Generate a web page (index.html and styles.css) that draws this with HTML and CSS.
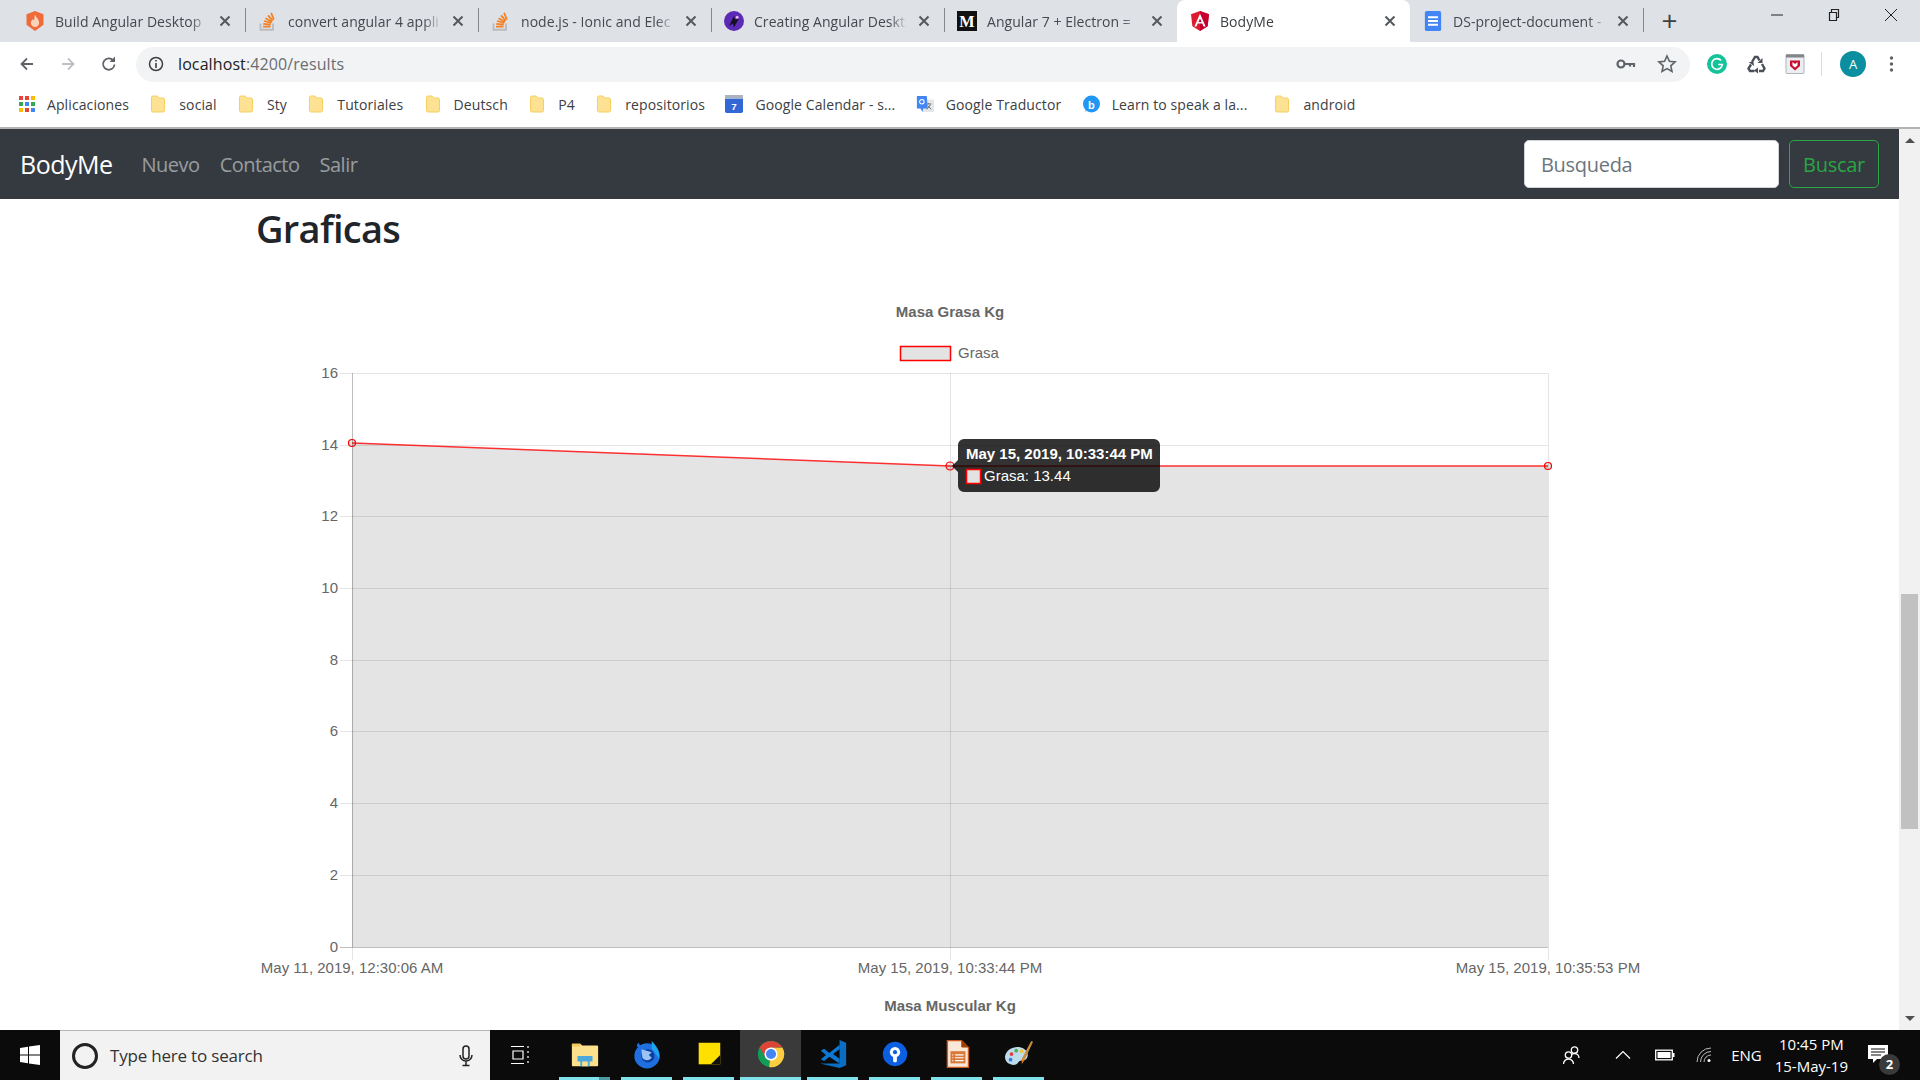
FILE: index.html
```html
<!DOCTYPE html>
<html lang="en">
<head>
  <meta charset="UTF-8">
  <title>BodyMe</title>
  <link rel="stylesheet" href="styles.css">
</head>
<body>
  <svg class="defs" width="0" height="0">
    <symbol id="so" viewBox="0 0 16 16">
      <path d="M2 10v5h10v-5" fill="none" stroke="#bcbbbb" stroke-width="1.5"/>
      <path d="M4 12.500h6M4.200 10.300l6 .6M4.800 8l5.800 1.600M6 5.800l5.200 3M8 3.500l3.800 4.400M10.500 1.500l2.200 5.400" fill="none" stroke="#f48024" stroke-width="1.4"/>
    </symbol>
    <symbol id="folder" viewBox="0 0 16 18">
      <path d="M1.5 2.500a1.500 1.500 0 0 1 1.500-1.500h4l2 2h4a1.500 1.500 0 0 1 1.500 1.500v11a1.500 1.500 0 0 1-1.500 1.500h-10a1.500 1.500 0 0 1-1.500-1.500z" fill="#fde293" stroke="#f6cf5f"/>
    </symbol>
    <symbol id="x" viewBox="0 0 12 12">
      <path d="M1.500 1.500l9 9M10.500 1.500l-9 9" stroke="#55585c" stroke-width="2" fill="none"/>
    </symbol>
  </svg>

  <div class="tabstrip">
    <div class="tab">
      <svg class="fav" viewBox="0 0 16 16"><path d="M8 0l6.800 2.500V11L8 16l-6.800-5V2.500z" fill="#ef6c3a"/><path d="M8 3c1 2.500 3.300 3.500 3.300 6.500A3.300 3.300 0 0 1 4.700 9.500c0-1.500.9-2.200 1.400-3.200.4.800.7 1 1.100 1.300C7.400 6 7.600 4.800 8 3z" fill="#fbd3b8"/></svg>
      <span class="tab-title">Build Angular Desktop</span>
      <svg class="tab-x"><use href="#x"/></svg>
    </div>
    <div class="tab sep">
      <svg class="fav"><use href="#so"/></svg>
      <span class="tab-title">convert angular 4 appli</span>
      <svg class="tab-x"><use href="#x"/></svg>
    </div>
    <div class="tab sep">
      <svg class="fav"><use href="#so"/></svg>
      <span class="tab-title">node.js - Ionic and Elec</span>
      <svg class="tab-x"><use href="#x"/></svg>
    </div>
    <div class="tab sep">
      <svg class="fav" viewBox="0 0 16 16"><circle cx="8" cy="8" r="8" fill="#5b2bb5"/><path d="M4 12l4-8 1 3 3-1-4 7-1-3z" fill="#14101f"/><circle cx="10.500" cy="5" r="1.200" fill="#e6b8ff"/></svg>
      <span class="tab-title">Creating Angular Deskt</span>
      <svg class="tab-x"><use href="#x"/></svg>
    </div>
    <div class="tab sep">
      <svg class="fav" viewBox="0 0 16 16"><rect width="16" height="16" fill="#111"/><text x="8" y="12.500" class="fav-m">M</text></svg>
      <span class="tab-title">Angular 7 + Electron =</span>
      <svg class="tab-x"><use href="#x"/></svg>
    </div>
    <div class="tab active">
      <svg class="fav" viewBox="0 0 16 16"><path d="M8 0L.800 2.600l1.100 9.500L8 16l6.100-3.900 1.100-9.500z" fill="#dd1b2e"/><path d="M8 0v16l6.100-3.900 1.100-9.500z" fill="#c3002f"/><path d="M8 2.200L3.500 12.300h1.700l.9-2.300h3.800l.9 2.300h1.700zM8 6l1.300 2.800H6.700z" fill="#fff"/></svg>
      <span class="tab-title">BodyMe</span>
      <svg class="tab-x"><use href="#x"/></svg>
    </div>
    <div class="tab">
      <svg class="fav" viewBox="0 0 16 16"><rect x="1.500" width="13" height="16" rx="1.500" fill="#4285f4"/><path d="M4 5h8M4 8h8M4 11h8" stroke="#fff" stroke-width="1.500"/></svg>
      <span class="tab-title">DS-project-document -</span>
      <svg class="tab-x"><use href="#x"/></svg>
    </div>
    <div class="new-tab">+</div>
    <div class="win-btns">
      <svg viewBox="0 0 14 14"><path d="M1 7h12" stroke="#222" stroke-width="1"/></svg>
      <svg viewBox="0 0 14 14"><path d="M2.500 4.500h7v8h-7zM4.500 4.500v-3h7v8h-2" fill="none" stroke="#222" stroke-width="1.200"/></svg>
      <svg viewBox="0 0 14 14"><path d="M1 1l12 12M13 1L1 13" stroke="#222" stroke-width="1"/></svg>
    </div>
  </div>

  <div class="toolbar">
    <svg class="nav-ic" viewBox="0 0 18 18"><path d="M15 9H4M9 3.500L3.500 9 9 14.500" fill="none" stroke="#5f6368" stroke-width="1.800"/></svg>
    <svg class="nav-ic" viewBox="0 0 18 18"><path d="M3 9h11M9 3.500L14.500 9 9 14.500" fill="none" stroke="#bdc1c6" stroke-width="1.800"/></svg>
    <svg class="nav-ic" viewBox="0 0 18 18"><path d="M14.500 9.500a5.700 5.700 0 1 1-1.500-4.300" fill="none" stroke="#5f6368" stroke-width="1.800"/><path d="M15 1.500V7H9.500z" fill="#5f6368"/></svg>
    <div class="omnibox">
      <svg class="info" viewBox="0 0 16 16"><circle cx="8" cy="8" r="6.500" fill="none" stroke="#3c4043" stroke-width="1.500"/><path d="M8 7v5M8 4v1.600" stroke="#3c4043" stroke-width="1.600"/></svg>
      <span class="url">localhost<span class="url-path">:4200/results</span></span>
      <svg class="key" viewBox="0 0 20 12"><circle cx="5" cy="6" r="3.500" fill="none" stroke="#5f6368" stroke-width="2.200"/><path d="M8 6h10v3M14 6v2.500" fill="none" stroke="#5f6368" stroke-width="2.200"/></svg>
      <svg class="star" viewBox="0 0 20 20"><path d="M10 2l2.400 5.300 5.700.6-4.300 3.900 1.200 5.700L10 14.600l-5 2.900 1.200-5.700-4.300-3.900 5.700-.6z" fill="none" stroke="#5f6368" stroke-width="1.600"/></svg>
    </div>
    <div class="ext-icons">
      <svg viewBox="0 0 20 20"><circle cx="10" cy="10" r="10" fill="#15c39a"/><path d="M14 6.500a5.300 5.300 0 1 0 1.300 4h-4" fill="none" stroke="#fff" stroke-width="1.700"/></svg>
      <svg viewBox="0 0 20 20"><g fill="none" stroke="#4a5058" stroke-width="2.400"><path d="M6 8l3-5h2.500l2 3.500"/><path d="M16 10l2.500 4.500-1.500 2.500h-4"/><path d="M8.500 17H4l-1.500-2.500L5 10.500"/></g><path d="M16.500 4v5h-5zM2.500 8h5l.5 4zM12 13.500v6L8 16.500z" fill="#4a5058"/></svg>
      <svg viewBox="0 0 20 20"><rect x="1" y=".5" width="18" height="19" rx="1" fill="#eceff1" stroke="#b0b5b9"/><rect x="1" y=".5" width="18" height="3" fill="#80868b"/><path d="M5 6.500h10v5.500l-5 4.500-5-4.500z" fill="#c8102e"/><path d="M7.500 8v3.500l2.500 2 2.500-2V8L10 10z" fill="#fff"/></svg>
      <div class="ext-sep"></div>
      <div class="avatar">A</div>
      <svg class="dots" viewBox="0 0 4 18"><circle cx="2" cy="3" r="1.700"/><circle cx="2" cy="9" r="1.700"/><circle cx="2" cy="15" r="1.700"/></svg>
    </div>
  </div>

  <div class="bookmarks">
    <div class="bm bm-apps">
      <svg class="bm-ic" viewBox="0 0 16 16">
        <rect x="0" y="0" width="4" height="4" fill="#ea4335"/><rect x="6" y="0" width="4" height="4" fill="#ea4335"/><rect x="12" y="0" width="4" height="4" fill="#fbbc04"/>
        <rect x="0" y="6" width="4" height="4" fill="#34a853"/><rect x="6" y="6" width="4" height="4" fill="#4285f4"/><rect x="12" y="6" width="4" height="4" fill="#34a853"/>
        <rect x="0" y="12" width="4" height="4" fill="#fbbc04"/><rect x="6" y="12" width="4" height="4" fill="#ea4335"/><rect x="12" y="12" width="4" height="4" fill="#4285f4"/>
      </svg>Aplicaciones
    </div>
    <div class="bm"><svg class="bm-ic"><use href="#folder"/></svg>social</div>
    <div class="bm"><svg class="bm-ic"><use href="#folder"/></svg>Sty</div>
    <div class="bm"><svg class="bm-ic"><use href="#folder"/></svg>Tutoriales</div>
    <div class="bm"><svg class="bm-ic"><use href="#folder"/></svg>Deutsch</div>
    <div class="bm"><svg class="bm-ic"><use href="#folder"/></svg>P4</div>
    <div class="bm"><svg class="bm-ic"><use href="#folder"/></svg>repositorios</div>
    <div class="bm"><svg class="bm-ic" viewBox="0 0 20 20"><path d="M0 4h20v14a2 2 0 0 1-2 2H2a2 2 0 0 1-2-2z" fill="#3367d6"/><rect width="20" height="4" fill="#aab4c0"/><text x="10" y="17" class="cal-num">7</text></svg>Google Calendar - s...</div>
    <div class="bm"><svg class="bm-ic" viewBox="0 0 20 20"><rect x="7" y="5" width="13" height="14" rx="1" fill="#e4e6e8"/><path d="M11 10h6M14 9v1M12 16l4-5M13 12l4 4" stroke="#5f6368" stroke-width="1" fill="none"/><path d="M1 1h11l1 14H8l-1 4-2-4H1z" fill="#4285f4"/><circle cx="6.500" cy="7.500" r="2.500" fill="none" stroke="#fff" stroke-width="1.200"/></svg>Google Traductor</div>
    <div class="bm bm-learn"><svg class="bm-ic" viewBox="0 0 18 18"><circle cx="9.500" cy="9" r="8.500" fill="#2196f3"/><path d="M.5 17c2 0 3-1 3.500-2l1 1z" fill="#2196f3"/><text x="9.500" y="13.500" class="cal-num">b</text></svg>Learn to speak a la...</div>
    <div class="bm"><svg class="bm-ic"><use href="#folder"/></svg>android</div>
  </div>

  <div class="viewport">
    <div class="page">
      <nav class="navbar">
        <a class="brand">BodyMe</a>
        <a class="nav-link">Nuevo</a>
        <a class="nav-link">Contacto</a>
        <a class="nav-link">Salir</a>
        <form class="search">
          <input class="search-input" type="text" placeholder="Busqueda">
          <button class="search-btn" type="button">Buscar</button>
        </form>
      </nav>
      <main class="content">
        <h1>Graficas</h1>
        <svg class="chart" width="1420" height="780" viewBox="0 0 1420 780">
          <text x="711" y="37" class="chart-title">Masa Grasa Kg</text>
          <rect x="661.500" y="66.500" width="50" height="14" fill="#e3e3e3" stroke="#f00" stroke-width="1.500"/>
          <text x="719" y="78" class="tick">Grasa</text>

          <path d="M113 163L711 186L1309 186V667H113Z" fill="#e4e4e4"/>
          <g class="grid">
            <path d="M101 93.500H1309M101 165.500H1309M101 236.500H1309M101 308.500H1309M101 380.500H1309M101 451.500H1309M101 523.500H1309M101 595.500H1309"/>
            <path d="M711.500 93V680M1309.500 93V680M113.500 667V680"/>
          </g>
          <path class="axis" d="M113.500 93V667M101 667.500H1309"/>

          <text x="99" y="98" class="tick end">16</text>
          <text x="99" y="170" class="tick end">14</text>
          <text x="99" y="241" class="tick end">12</text>
          <text x="99" y="313" class="tick end">10</text>
          <text x="99" y="385" class="tick end">8</text>
          <text x="99" y="456" class="tick end">6</text>
          <text x="99" y="528" class="tick end">4</text>
          <text x="99" y="600" class="tick end">2</text>
          <text x="99" y="672" class="tick end">0</text>

          <text x="113" y="693" class="tick mid">May 11, 2019, 12:30:06 AM</text>
          <text x="711" y="693" class="tick mid">May 15, 2019, 10:33:44 PM</text>
          <text x="1309" y="693" class="tick mid">May 15, 2019, 10:35:53 PM</text>

          <path class="line" d="M113 163L711 186L1309 186"/>
          <circle class="pt" cx="113" cy="163" r="3.500"/>
          <circle class="pt" cx="711" cy="186" r="4"/>
          <circle class="pt" cx="1309" cy="186" r="3.500"/>

          <path class="tip" d="M725 159h190a6 6 0 0 1 6 6v41a6 6 0 0 1-6 6h-190a6 6 0 0 1-6-6v-14l-6-6 6-6v-15a6 6 0 0 1 6-6z"/>
          <text x="727" y="179" class="tip-head">May 15, 2019, 10:33:44 PM</text>
          <rect x="727.500" y="189.500" width="14" height="14" fill="#e3e3e3" stroke="#f00" stroke-width="1.500"/>
          <text x="745" y="201" class="tip-body">Grasa: 13.44</text>

          <text x="711" y="731" class="chart-title">Masa Muscular Kg</text>
        </svg>
      </main>
    </div>
    <div class="scrollbar">
      <div class="arrow-up"></div>
      <div class="thumb"></div>
      <div class="arrow-down"></div>
    </div>
  </div>

  <footer class="taskbar">
    <div class="start">
      <svg viewBox="0 0 20 20"><path d="M0 3l8-1.200V9.500H0zM9 1.600L20 0v9.500H9zM0 10.500h8v7.700L0 17zM9 10.500h11V20L9 18.400z" fill="#fff"/></svg>
    </div>
    <div class="searchbox">
      <span class="cortana"></span>
      <span class="search-text">Type here to search</span>
      <svg class="mic" viewBox="0 0 14 22"><rect x="4" y="1" width="6" height="13" rx="3" fill="none" stroke="#222" stroke-width="1.500"/><path d="M1 10a6 6 0 0 0 12 0M7 16v4M3.500 20.500h7" fill="none" stroke="#222" stroke-width="1.500"/></svg>
    </div>
    <div class="task-view">
      <svg viewBox="0 0 20 20"><path d="M1 1.500h13M1 18.500h13M3 6h10v8H3zM18 1v2M18 6v2M18 11v2M18 16v2" fill="none" stroke="#fff" stroke-width="1.200"/></svg>
    </div>
    <div class="task-apps">
      <div class="app run stack">
        <svg viewBox="0 0 32 32"><path d="M2 6a1 1 0 0 1 1-1h8l2 2h16a1 1 0 0 1 1 1v20a1 1 0 0 1-1 1H3a1 1 0 0 1-1-1z" fill="#fde08b"/><path d="M2 5h9v3H2z" fill="#f4c95c"/><path d="M8 18h16v6h-3v5h-10v-5H8z" fill="#4fa8dc"/><rect x="13" y="24" width="6" height="5" fill="#fde08b"/></svg>
      </div>
      <div class="app run">
        <svg viewBox="0 0 32 32"><circle cx="16" cy="18" r="13.500" fill="#1f6fe0"/><path d="M21 2c5 5 9 11 8 19l-8-11z" fill="#1fa3ef"/><path d="M5 8c0-2 1-3 2-4l3 5z" fill="#1f6fe0"/><circle cx="17" cy="18" r="7" fill="#0c3f9e"/><path d="M10 11l11 3-3 3 3 3c-3 4-8 3-10 0z" fill="#9cc3f5"/></svg>
      </div>
      <div class="app run">
        <svg viewBox="0 0 32 32"><rect x="5" y="4" width="23" height="23" fill="#ffe000"/><path d="M28 27H18l10-10z" fill="#111"/></svg>
      </div>
      <div class="app run on">
        <svg viewBox="0 0 32 32"><circle cx="16" cy="16" r="14" fill="#0f9d58"/><path d="M16 9h12.100A14 14 0 0 1 14 29.900L16 16z" fill="#ffcd40"/><path d="M3.900 9a14 14 0 0 1 24.200 0H16L9.900 19.500z" fill="#db4437"/><circle cx="16" cy="16" r="7" fill="#fff"/><circle cx="16" cy="16" r="5.400" fill="#4285f4"/></svg>
      </div>
      <div class="app run">
        <svg viewBox="0 0 32 32"><path d="M23 1l7 3v24l-7 3L2 26h21V5z" fill="#0a6fc2"/><path d="M23 6v5l-7 5 7 5v5L12 19l-5.500 4.500L3 21.500 8.500 17 3 12.500l3.500-2L12 15z" fill="#0a78d4"/></svg>
      </div>
      <div class="app run">
        <svg viewBox="0 0 32 32"><circle cx="16" cy="16" r="13" fill="#0b5fe0"/><circle cx="16" cy="14" r="5.500" fill="#fff"/><circle cx="16" cy="14" r="2.200" fill="#0b5fe0"/><path d="M14 18h4v6l-2 1-2-1z" fill="#fff"/></svg>
      </div>
      <div class="app run">
        <svg viewBox="0 0 32 32"><path d="M5 1h16l8 8v22H5z" fill="#c85b1e"/><path d="M6.500 2.500h14v6h7v21h-21z" fill="#fbe7d8"/><path d="M21 1l8 8h-8z" fill="#a33e03"/><rect x="9" y="13" width="16" height="13" fill="#d97a3c"/><path d="M14 17h9M14 20h9M14 23h9M11 17h1M11 20h1M11 23h1" stroke="#fff" stroke-width="1.300"/></svg>
      </div>
      <div class="app run">
        <svg viewBox="0 0 32 32"><path d="M1 19C2 11 11 7 18 9c7 2 9 8 6 12-2 3-6 1-8 3-2 3-5 5-9 3-4-1-6-4-6-8z" fill="#bcdcec"/><circle cx="8" cy="16" r="2" fill="#e23c3c"/><circle cx="13" cy="12.500" r="2" fill="#4caf50"/><circle cx="7" cy="22" r="2" fill="#3a7bd5"/><circle cx="19" cy="13" r="2" fill="#f4c430"/><path d="M29 2l2 1-9 19-3-1z" fill="#c6893f"/><path d="M19 21l3 1-3 5z" fill="#e07a1f"/></svg>
      </div>
    </div>
    <div class="tray">
      <svg class="tray-people" viewBox="0 0 20 20"><circle cx="12.500" cy="5" r="3.200" fill="none" stroke="#fff" stroke-width="1.300"/><path d="M8 13a4.500 4.500 0 0 1 9 0" fill="none" stroke="#fff" stroke-width="1.300"/><circle cx="6.500" cy="10" r="3.200" fill="#0b0b0b" stroke="#fff" stroke-width="1.300"/><path d="M1.500 19a5 5 0 0 1 10 0" fill="none" stroke="#fff" stroke-width="1.300"/></svg>
      <svg class="tray-chev" viewBox="0 0 16 10"><path d="M1 8.500L8 1.500l7 7" fill="none" stroke="#fff" stroke-width="1.200"/></svg>
      <svg class="tray-batt" viewBox="0 0 20 12"><rect x=".7" y="1.200" width="16.600" height="9.600" fill="#0b0b0b" stroke="#fff" stroke-width="1.300"/><rect x="2.500" y="3" width="13" height="6" fill="#fff"/><rect x="18" y="4" width="1.500" height="4" fill="#fff"/></svg>
      <svg class="tray-wifi" viewBox="0 0 16 16"><path d="M1 15A14 14 0 0 1 15 1M4.500 15A10.500 10.500 0 0 1 15 4.500M8 15a7 7 0 0 1 7-7" fill="none" stroke="#bbb" stroke-width="1"/><circle cx="13" cy="13.500" r="1.500" fill="#fff"/></svg>
      <span class="tray-lang">ENG</span>
      <div class="clock"><span>10:45 PM</span><span>15-May-19</span></div>
      <div class="notif">
        <svg viewBox="0 0 20 18"><path d="M0 0h20v14H9l-4 4v-4H0z" fill="#fff"/><path d="M3 4h14M3 7h14M3 10h10" stroke="#0b0b0b" stroke-width="1"/></svg>
        <span class="notif-count">2</span>
      </div>
    </div>
  </footer>
</body>
</html>
```

FILE: styles.css
```css
* {
  box-sizing: border-box;
}
html, body {
  margin: 0;
  height: 100%;
}
body {
  width: 1920px;
  height: 1080px;
  overflow: hidden;
  display: flex;
  flex-direction: column;
  font-family: "Open Sans", "Noto Sans", sans-serif;
  background: #fff;
}
.defs {
  position: absolute;
}

/* browser tabs */
.tabstrip {
  height: 42px;
  flex: none;
  display: flex;
  background: #dee1e6;
  padding-left: 12px;
}
.tab {
  width: 233px;
  height: 42px;
  display: flex;
  align-items: center;
  padding: 0 0 0 13px;
  position: relative;
  font-size: 14px;
  letter-spacing: 0.05px;
  color: #45494e;
}
.tab.sep::before {
  content: "";
  position: absolute;
  left: 0;
  top: 8px;
  height: 24px;
  width: 1px;
  background: #85888c;
}
.tab.active {
  background: #fff;
  border-radius: 8px 8px 0 0;
  color: #3c4043;
}
.fav {
  width: 20px;
  height: 20px;
  flex: none;
}
.fav-m {
  font-family: "Liberation Serif", serif;
  font-weight: 700;
  font-size: 13px;
  fill: #fff;
  text-anchor: middle;
}
.tab-title {
  margin-left: 10px;
  width: 154px;
  flex: none;
  white-space: nowrap;
  -webkit-mask-image: linear-gradient(to right, #000 88%, transparent);
  mask-image: linear-gradient(to right, #000 88%, transparent);
}
.tab-x {
  width: 12px;
  height: 12px;
  margin-left: 10px;
  flex: none;
}
.new-tab {
  width: 52px;
  height: 24px;
  margin-top: 8px;
  text-align: center;
  font-size: 28px;
  line-height: 24px;
  color: #3c4043;
  border-left: 1px solid #85888c;
}
.win-btns {
  margin-left: auto;
  display: flex;
  gap: 43px;
  padding: 8px 22px 0 0;
}
.win-btns svg {
  width: 14px;
  height: 14px;
}

/* address bar */
.toolbar {
  height: 44px;
  flex: none;
  display: flex;
  align-items: center;
  background: #fff;
  padding-left: 18px;
}
.nav-ic {
  width: 18px;
  height: 18px;
  margin-right: 23px;
  flex: none;
}
.omnibox {
  margin-left: -5px;
  width: 1554px;
  height: 35px;
  border-radius: 18px;
  background: #f1f3f4;
  display: flex;
  align-items: center;
  padding-left: 12px;
}
.info {
  width: 16px;
  height: 16px;
  flex: none;
}
.url {
  margin-left: 14px;
  font-size: 16px;
  letter-spacing: 0.1px;
  color: #202124;
}
.url-path {
  color: #6a6d71;
}
.key {
  margin-left: auto;
  width: 20px;
  height: 12px;
}
.star {
  margin: 0 13px 0 21px;
  width: 20px;
  height: 20px;
}
.ext-icons {
  display: flex;
  align-items: center;
  margin-left: 17px;
  gap: 19px;
}
.ext-icons > svg {
  width: 20px;
  height: 20px;
}
.ext-sep {
  width: 1px;
  height: 24px;
  background: #dadce0;
  margin: 0 -3px;
}
.avatar {
  width: 26px;
  height: 26px;
  border-radius: 50%;
  background: #0a8ea0;
  color: #fff;
  font-size: 13px;
  text-align: center;
  line-height: 26px;
  margin-left: 2px;
}
.ext-icons > .dots {
  width: 5px;
  height: 18px;
  fill: #5f6368;
  margin-left: 4px;
}

/* bookmarks */
.bookmarks {
  height: 43px;
  flex: none;
  display: flex;
  align-items: center;
  padding: 0 0 5px 19px;
  background: #fff;
  border-bottom: 2px solid #b3b3b3;
  font-size: 14px;
  letter-spacing: 0.1px;
  color: #3c4043;
  white-space: nowrap;
}
.bm {
  display: flex;
  align-items: center;
  margin-right: 20.4px;
}
.bm-learn {
  margin-right: 26px;
}
.bm-ic {
  width: 18px;
  height: 18px;
  margin-right: 12px;
  flex: none;
}
.bm-apps .bm-ic {
  width: 16px;
  height: 16px;
  margin-right: 12px;
}
.cal-num {
  font-family: "Liberation Sans", sans-serif;
  font-weight: 700;
  font-size: 11px;
  fill: #fff;
  text-anchor: middle;
}

/* page */
.viewport {
  flex: 1;
  display: flex;
  min-height: 0;
}
.page {
  flex: 1;
  min-width: 0;
  overflow: hidden;
}
.navbar {
  height: 70px;
  background: #343a40;
  display: flex;
  align-items: center;
  padding: 0 20px;
}
.brand {
  font-size: 25px;
  letter-spacing: -0.5px;
  color: #fff;
  margin-right: 29px;
}
.nav-link {
  font-size: 20px;
  letter-spacing: -0.5px;
  color: rgba(255, 255, 255, 0.5);
  margin-right: 20px;
}
.search {
  margin-left: auto;
  display: flex;
  gap: 10px;
}
.search-input {
  width: 255px;
  height: 48px;
  padding: 0 16px;
  border: 1px solid #ced4da;
  border-radius: 5px;
  background: #fff;
  font-family: inherit;
  font-size: 20px;
  letter-spacing: -0.3px;
}
.search-input::placeholder {
  color: #6c757d;
}
.search-btn {
  width: 90px;
  height: 48px;
  border: 1px solid #28a745;
  border-radius: 5px;
  background: transparent;
  color: #28a745;
  font-family: inherit;
  font-size: 20px;
  letter-spacing: -0.3px;
  padding: 0;
}
.content {
  padding-left: 256px;
}
h1 {
  margin: 0;
  font-size: 38px;
  line-height: 58px;
  font-weight: 600;
  letter-spacing: -0.7px;
  color: #212529;
}

/* chart */
.chart {
  display: block;
  margin: 23px 0 0 -17px;
  font-family: "Liberation Sans", Arial, sans-serif;
}
.chart-title {
  font-size: 15px;
  font-weight: 700;
  fill: #666;
  text-anchor: middle;
}
.tick {
  font-size: 15px;
  fill: #666;
}
.tick.end {
  text-anchor: end;
}
.tick.mid {
  text-anchor: middle;
}
.grid path {
  stroke: rgba(0, 0, 0, 0.1);
  stroke-width: 1;
  fill: none;
}
.axis {
  stroke: rgba(0, 0, 0, 0.25);
  stroke-width: 1;
  fill: none;
}
.line {
  stroke: #f00;
  stroke-width: 1.500;
  fill: none;
  opacity: 0.8;
}
.pt {
  fill: rgba(0, 0, 0, 0.1);
  stroke: #f00;
  stroke-width: 1.200;
}
.tip {
  fill: rgba(0, 0, 0, 0.8);
}
.tip-head {
  font-size: 15px;
  font-weight: 700;
  fill: #fff;
}
.tip-body {
  font-size: 15px;
  fill: #fff;
}

/* scrollbar */
.scrollbar {
  width: 21px;
  flex: none;
  background: #f1f1f1;
  position: relative;
}
.thumb {
  position: absolute;
  top: 465px;
  left: 2px;
  width: 17px;
  height: 235px;
  background: #c1c1c1;
}
.arrow-up,
.arrow-down {
  position: absolute;
  left: 6px;
  width: 0;
  height: 0;
  border-left: 5px solid transparent;
  border-right: 5px solid transparent;
}
.arrow-up {
  top: 9px;
  border-bottom: 5px solid #505050;
}
.arrow-down {
  bottom: 9px;
  border-top: 5px solid #505050;
}

/* windows taskbar */
.taskbar {
  height: 50px;
  flex: none;
  display: flex;
  background: #0b0b0b;
  color: #fff;
}
.start {
  width: 60px;
  display: flex;
  align-items: center;
  justify-content: center;
}
.start svg {
  width: 20px;
  height: 20px;
}
.searchbox {
  width: 430px;
  background: #f2f2f2;
  border-top: 1px solid #b5b5b5;
  display: flex;
  align-items: center;
  padding: 0 17px 0 12px;
  color: #333;
  font-size: 17px;
  letter-spacing: -0.2px;
}
.cortana {
  width: 26px;
  height: 26px;
  border: 3px solid #222;
  border-radius: 50%;
  flex: none;
}
.search-text {
  margin-left: 12px;
}
.mic {
  margin-left: auto;
  width: 14px;
  height: 22px;
}
.task-view {
  width: 60px;
  display: flex;
  align-items: center;
  justify-content: center;
}
.task-view svg {
  width: 20px;
  height: 20px;
}
.task-apps {
  display: flex;
  margin-left: 9px;
  gap: 11px;
}
.app {
  width: 51px;
  height: 50px;
  display: flex;
  align-items: center;
  justify-content: center;
  border-bottom: 3px solid #7fe3eb;
}
.app.stack {
  border-image: linear-gradient(to right, #7fe3eb 78%, #4e9a9f 78%) 1;
}
.app.on {
  width: 61px;
  margin: 0 -5px;
  background: #3a3a3a;
}
.app svg {
  width: 30px;
  height: 30px;
}
.tray {
  margin-left: auto;
  display: flex;
  align-items: center;
  font-size: 15px;
  position: relative;
}
.tray-people {
  width: 20px;
  height: 20px;
  margin-right: 33px;
}
.tray-chev {
  width: 16px;
  height: 10px;
  margin-right: 24px;
}
.tray-batt {
  width: 20px;
  height: 12px;
  margin-right: 21px;
}
.tray-wifi {
  width: 16px;
  height: 16px;
  margin-right: 19px;
}
.tray-lang {
  margin-right: 13px;
}
.clock {
  display: flex;
  flex-direction: column;
  align-items: center;
  line-height: 22px;
  margin-right: 20px;
}
.notif {
  position: relative;
  width: 52px;
  height: 50px;
  padding-top: 15px;
}
.notif svg {
  width: 20px;
  height: 18px;
  display: block;
}
.notif-count {
  position: absolute;
  left: 11px;
  top: 24px;
  width: 21px;
  height: 21px;
  border-radius: 50%;
  background: #3a3a3a;
  font-size: 13px;
  font-weight: 700;
  text-align: center;
  line-height: 21px;
}
```
